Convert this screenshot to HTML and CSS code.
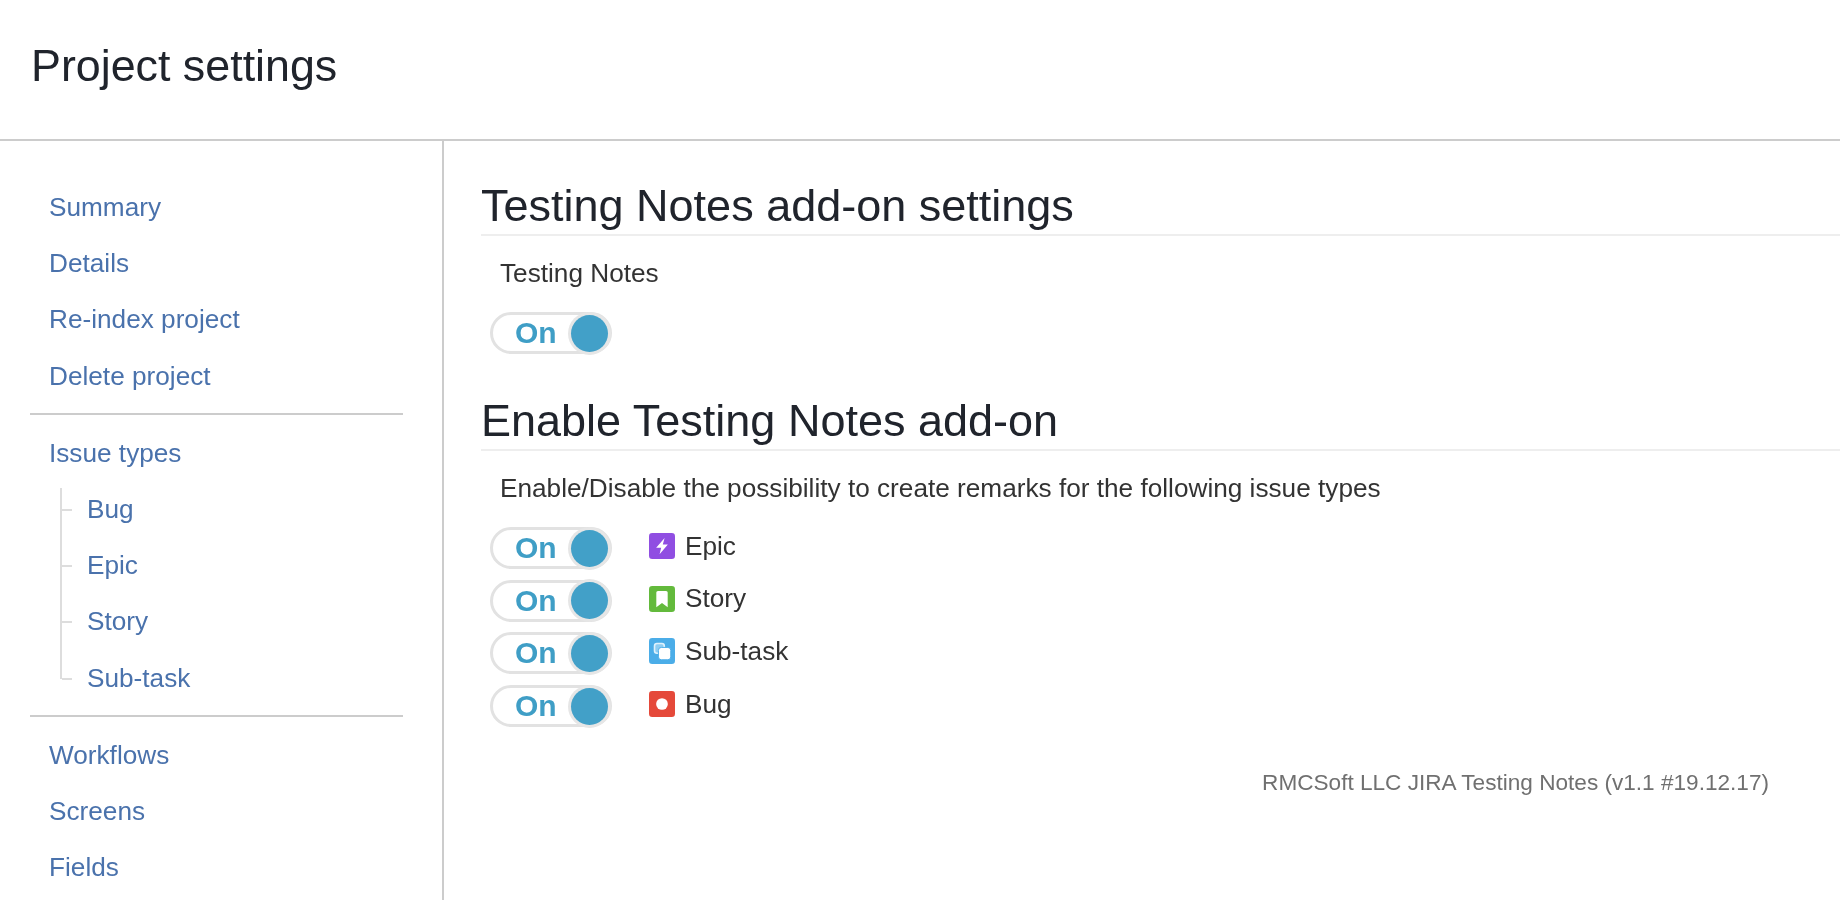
FILE: index.html
```html
<!DOCTYPE html>
<html lang="en">
<head>
  <meta charset="UTF-8">
  <title>Project settings</title>
  <link rel="stylesheet" href="styles.css">
</head>
<body>
  <header class="page-header">
    <h1>Project settings</h1>
  </header>
  <div class="page-body">
    <nav class="sidebar">
      <ul class="nav-list">
        <li><a href="#">Summary</a></li>
        <li><a href="#">Details</a></li>
        <li><a href="#">Re-index project</a></li>
        <li><a href="#">Delete project</a></li>
      </ul>
      <ul class="nav-list">
        <li><a href="#">Issue types</a>
          <ul class="nav-tree">
            <li><a href="#">Bug</a></li>
            <li><a href="#">Epic</a></li>
            <li><a href="#">Story</a></li>
            <li><a href="#">Sub-task</a></li>
          </ul>
        </li>
      </ul>
      <ul class="nav-list">
        <li><a href="#">Workflows</a></li>
        <li><a href="#">Screens</a></li>
        <li><a href="#">Fields</a></li>
      </ul>
    </nav>
    <main class="content">
      <h2>Testing Notes add-on settings</h2>
      <p class="field-label">Testing Notes</p>
      <div class="toggle"><span>On</span><i class="knob"></i></div>

      <h2 class="second">Enable Testing Notes add-on</h2>
      <p class="field-label">Enable/Disable the possibility to create remarks for the following issue types</p>
      <div class="type-list">
        <div class="type-row">
          <div class="toggle"><span>On</span><i class="knob"></i></div>
          <svg class="type-icon" viewBox="0 0 16 16"><rect width="16" height="16" rx="2" fill="#904ee2"/><path d="M9.6 3 4.4 9h3.1l-1 4 5.1-6H8.5z" fill="#fff"/></svg>
          <span class="type-name">Epic</span>
        </div>
        <div class="type-row">
          <div class="toggle"><span>On</span><i class="knob"></i></div>
          <svg class="type-icon" viewBox="0 0 16 16"><rect width="16" height="16" rx="2" fill="#63ba3c"/><path d="M4.5 4a1 1 0 0 1 1-1h5a1 1 0 0 1 1 1v9L8 10.4 4.5 13z" fill="#fff"/></svg>
          <span class="type-name">Story</span>
        </div>
        <div class="type-row">
          <div class="toggle"><span>On</span><i class="knob"></i></div>
          <svg class="type-icon" viewBox="0 0 16 16"><rect width="16" height="16" rx="2" fill="#4bade8"/><rect x="3.4" y="3.4" width="6" height="6" rx="1.5" fill="#8fcdf2" stroke="#dff1fc" stroke-width="1"/><rect x="5.8" y="5.8" width="7.6" height="7.6" rx="1.8" fill="#fff" stroke="#4bade8" stroke-width=".6"/></svg>
          <span class="type-name">Sub-task</span>
        </div>
        <div class="type-row">
          <div class="toggle"><span>On</span><i class="knob"></i></div>
          <svg class="type-icon" viewBox="0 0 16 16"><rect width="16" height="16" rx="2" fill="#e5493a"/><circle cx="8" cy="8" r="3.6" fill="#fff"/></svg>
          <span class="type-name">Bug</span>
        </div>
      </div>
      <p class="version">RMCSoft LLC JIRA Testing Notes (v1.1 #19.12.17)</p>
    </main>
  </div>
</body>
</html>
```

FILE: styles.css
```css
html, body {
  margin: 0;
  height: 900px;
  overflow: hidden;
}
body {
  font-family: "Liberation Sans", Arial, sans-serif;
  font-size: 26.2px;
  color: #333;
  background: #fff;
  filter: blur(.4px);
}
a {
  color: #4a72ac;
  text-decoration: none;
}
ul {
  list-style: none;
  margin: 0;
  padding: 0;
}

.page-header {
  height: 139px;
  border-bottom: 2px solid #ccc;
}
.page-header h1 {
  margin: 0;
  padding: 40px 0 0 31px;
  font-size: 44.8px;
  line-height: 50px;
  font-weight: normal;
  color: #20242c;
}

.page-body {
  display: flex;
  height: 759px;
}
.sidebar {
  width: 444px;
  flex: none;
  box-sizing: border-box;
  padding: 38px 39px 0 30px;
  border-right: 2px solid #ccc;
}
.nav-list {
  padding-bottom: 9px;
  border-bottom: 2px solid #ccc;
  margin-bottom: 10px;
}
.nav-list:last-child {
  border-bottom: none;
}
.nav-list li {
  line-height: 56.2px;
  padding-left: 19px;
}
.nav-tree {
  margin-left: -19px;
  padding-left: 12px;
  position: relative;
}
.nav-tree li {
  position: relative;
  padding-left: 45px;
}
.nav-tree::before {
  content: "";
  position: absolute;
  left: 30px;
  top: 7px;
  bottom: 27px;
  width: 2px;
  background: #ddd;
}
.nav-tree li::before {
  content: "";
  position: absolute;
  left: 20px;
  top: 28px;
  width: 10px;
  height: 2px;
  background: #ddd;
}

.content {
  flex: 1;
  padding: 40px 0 0 37px;
}
h2 {
  margin: 0;
  font-size: 45px;
  line-height: 50px;
  font-weight: normal;
  color: #20242c;
  border-bottom: 2px solid #eee;
  padding-bottom: 3px;
}
.second {
  margin-top: 42px;
}
.field-label {
  margin: 18px 0 20px 19px;
  line-height: 38px;
}
.toggle {
  width: 122px;
  height: 42px;
  box-sizing: border-box;
  margin-left: 9px;
  padding: 0 1px 0 22px;
  border: 3px solid #e2e2e2;
  border-radius: 21px;
  display: flex;
  align-items: center;
  justify-content: space-between;
  flex: none;
}
.toggle span {
  font-size: 30px;
  font-weight: bold;
  color: #3f9ec6;
}
.knob {
  width: 37px;
  height: 37px;
  border-radius: 50%;
  background: #42a0c8;
  box-shadow: 0 0 0 3px #e6e6e6;
}

.type-list {
  display: flex;
  flex-direction: column;
  gap: 10.7px;
}
.type-row {
  display: flex;
  align-items: center;
}
.type-icon {
  width: 26px;
  height: 26px;
  margin: 0 10px 4px 37px;
}
.type-name {
  margin-bottom: 4px;
}
.version {
  margin: 41px 0 0;
  width: 1288px;
  text-align: right;
  font-size: 22.6px;
  line-height: 30px;
  color: #707070;
}
```
